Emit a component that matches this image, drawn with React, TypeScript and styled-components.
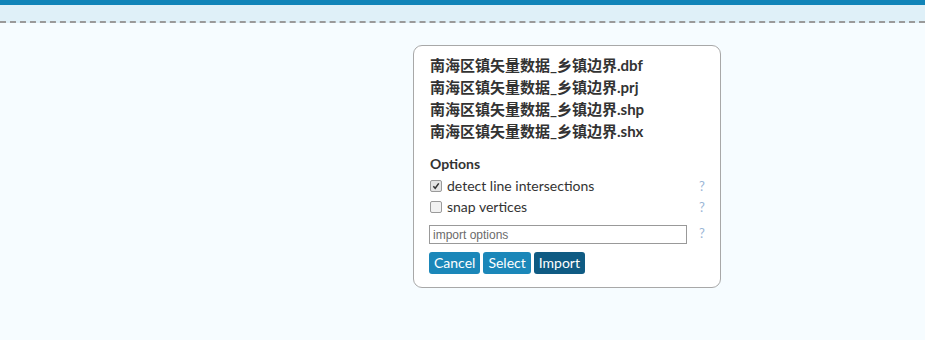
import React from "react";
import styled, { createGlobalStyle } from "styled-components";

const GlobalStyle = createGlobalStyle`
  html, body {
    margin: 0;
    padding: 0;
    background: #f6fcff;
  }
  body {
    font-family: "Lato", "Noto Sans CJK SC", sans-serif;
    color: #333;
  }
`;

const files = [
  "南海区镇矢量数据_乡镇边界.dbf",
  "南海区镇矢量数据_乡镇边界.prj",
  "南海区镇矢量数据_乡镇边界.shp",
  "南海区镇矢量数据_乡镇边界.shx",
];

const Page = styled.div`
  width: 925px;
  height: 340px;
  background: #f6fcff;
  overflow: hidden;
`;

const TopBar = styled.div`
  height: 5px;
  background: #1184b8;
`;

const Band = styled.div`
  height: 16px;
  background: #dff0f8;
  border-bottom: 2px dashed #9a9a9a;
`;

const Stage = styled.div`
  display: flex;
  padding: 22px 0 0 413px;
`;

const ImportBox = styled.div`
  width: 308px;
  box-sizing: border-box;
  background: #fff;
  border: 1px solid #a8a8a8;
  border-radius: 9px;
  padding: 8px 14px 13px 15px;
`;

const FileName = styled.div`
  padding-left: 1px;
  font-size: 15px;
  font-weight: 700;
  line-height: 22px;
  color: #333;
  white-space: nowrap;
`;

const Heading = styled.div`
  margin-top: 11px;
  padding-left: 1px;
  font-size: 14px;
  font-weight: 700;
  line-height: 22px;
  color: #333;
`;

const OptionRow = styled.div`
  display: flex;
  align-items: center;
  justify-content: space-between;
  height: 21px;
`;

const Label = styled.label`
  display: flex;
  align-items: center;
  gap: 5px;
  padding-left: 1px;
  font-size: 14px;
  color: #333;
`;

const Box = styled.span<{ $checked?: boolean }>`
  display: inline-flex;
  align-items: center;
  justify-content: center;
  width: 10px;
  height: 10px;
  border: 1px solid #9a9a9a;
  border-radius: 2px;
  background: ${(p) => (p.$checked ? "#e4e4e4" : "#f2f2f2")};
`;

const Help = styled.span`
  width: 8px;
  text-align: center;
  font-size: 13px;
  color: #9bb5d6;
`;

const InputRow = styled.div`
  display: flex;
  align-items: flex-start;
  justify-content: space-between;
  margin-top: 8px;
`;

const TextInput = styled.input`
  width: 258px;
  height: 19px;
  box-sizing: border-box;
  border: 1px solid #999;
  padding: 0 3px;
  font-family: "Liberation Sans", Arial, sans-serif;
  font-size: 12px;
  color: #333;
  outline: none;
  &::placeholder {
    color: #6b6b6b;
  }
`;

const Buttons = styled.div`
  display: flex;
  gap: 3px;
  margin-top: 8px;
`;

const Button = styled.button<{ $dark?: boolean }>`
  height: 22px;
  padding: 0 5px;
  border: none;
  border-radius: 3px;
  background: ${(p) => (p.$dark ? "#0f5b83" : "#1b87b9")};
  color: #fff;
  font-family: "Lato", sans-serif;
  font-size: 14px;
  line-height: 22px;
  cursor: pointer;
`;

const Check = () => (
  <svg width="8" height="8" viewBox="0 0 9 9">
    <path d="M1.5 4.8 L3.6 7 L7.6 1.6" fill="none" stroke="#333" strokeWidth="1.7" />
  </svg>
);

export default function App() {
  return (
    <Page>
      <GlobalStyle />
      <TopBar />
      <Band />
      <Stage>
        <ImportBox>
          {files.map((f) => (
            <FileName key={f}>{f}</FileName>
          ))}
          <Heading>Options</Heading>
          <OptionRow>
            <Label>
              <Box $checked>
                <Check />
              </Box>
              detect line intersections
            </Label>
            <Help>?</Help>
          </OptionRow>
          <OptionRow>
            <Label>
              <Box />
              snap vertices
            </Label>
            <Help>?</Help>
          </OptionRow>
          <InputRow>
            <TextInput placeholder="import options" />
            <Help>?</Help>
          </InputRow>
          <Buttons>
            <Button>Cancel</Button>
            <Button>Select</Button>
            <Button $dark>Import</Button>
          </Buttons>
        </ImportBox>
      </Stage>
    </Page>
  );
}
